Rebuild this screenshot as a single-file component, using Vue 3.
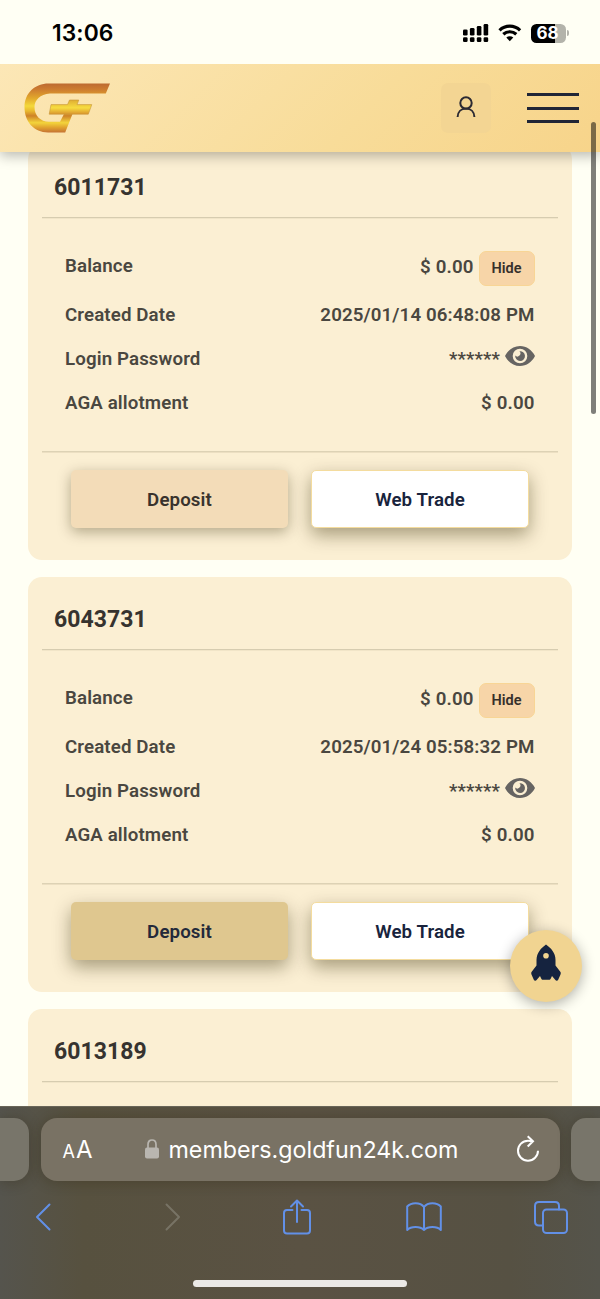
<script setup>
const accounts = [
  { id: '6011731', created: '2025/01/14 06:48:08 PM', tone: 'peach' },
  { id: '6043731', created: '2025/01/24 05:58:32 PM', tone: 'gold' },
  { id: '6013189' },
]
</script>

<template>
  <div class="phone">
    <div class="status">
      <span class="clock">13:06</span>
      <div class="indicators">
        <svg class="signal" width="26" height="18" viewBox="0 0 26 18">
          <rect x="0" y="5.5" width="4.6" height="6" rx="1.3" />
          <rect x="6.9" y="4" width="4.6" height="7.5" rx="1.3" />
          <rect x="13.8" y="2" width="4.6" height="9.5" rx="1.3" />
          <rect x="20.6" y="0" width="4.6" height="11.5" rx="1.3" />
          <rect x="0" y="13.3" width="4.6" height="4.7" rx="1.3" />
          <rect x="6.9" y="13.3" width="4.6" height="4.7" rx="1.3" />
          <rect x="13.8" y="13.3" width="4.6" height="4.7" rx="1.3" />
          <rect x="20.6" y="13.3" width="4.6" height="4.7" rx="1.3" />
        </svg>
        <svg class="wifi" width="24" height="18" viewBox="0 0 24 18">
          <path d="M1.5 6.3 A15 15 0 0 1 22.1 6.3" />
          <path d="M5.3 10.3 A9.6 9.6 0 0 1 18.3 10.3" />
          <path class="dot" d="M8.3 13.6 A5 5 0 0 1 15.3 13.6 L11.8 17.2 Z" />
        </svg>
        <div class="battery"><span>68</span></div>
        <i class="nub"></i>
      </div>
    </div>

    <header class="header">
      <svg class="logo" width="87" height="50" viewBox="0 0 87 50">
        <defs>
          <linearGradient id="gold" x1="0" y1="0" x2="0" y2="1">
            <stop offset="0" stop-color="#bd6a31" />
            <stop offset=".12" stop-color="#cd7c30" />
            <stop offset=".3" stop-color="#e2a82c" />
            <stop offset=".46" stop-color="#f4d93a" />
            <stop offset=".56" stop-color="#e9b92f" />
            <stop offset=".66" stop-color="#ce8228" />
            <stop offset=".8" stop-color="#f3d43b" />
            <stop offset=".9" stop-color="#e0a12f" />
            <stop offset="1" stop-color="#c57233" />
          </linearGradient>
          <linearGradient id="bar" x1="0" y1="0" x2="0" y2="1">
            <stop offset="0" stop-color="#dfae32" />
            <stop offset=".55" stop-color="#f7dc40" />
            <stop offset="1" stop-color="#d9942d" />
          </linearGradient>
        </defs>
        <path fill="url(#gold)" d="M24.5 .5 H86 L81.8 10.5 H26 C16 11.5 10.5 17 10.5 24 C10.5 33 16.5 38.5 25 38.8 H36 L40 31 H48.5 L41.2 49.5 H24 C10 49 .5 39 .5 24 C.5 10 11 .5 24.5 .5 Z" />
        <path fill="url(#bar)" stroke="#c8963a" stroke-width=".6" d="M27 21.6 H43.5 L45.5 17 H54.8 L53 21.6 H67.8 L64.3 31.2 H25.2 Z" />
      </svg>
      <button class="user">
        <svg width="20" height="22" viewBox="0 0 20 22">
          <circle cx="10" cy="7" r="5.7" />
          <path d="M1.6 21 C1.8 16 5 12.6 10 12.6 S18.2 16 18.4 21" />
        </svg>
      </button>
      <button class="menu"><i></i><i></i><i></i></button>
    </header>

    <main class="content">
      <section v-for="a in accounts" :key="a.id" class="card">
        <h2>{{ a.id }}</h2>
        <template v-if="a.created">
          <div class="details">
            <div class="row first">
              <span>Balance</span>
              <span class="value"><b class="amount">$ 0.00</b><button class="hide">Hide</button></span>
            </div>
            <div class="row"><span>Created Date</span><span>{{ a.created }}</span></div>
            <div class="row">
              <span>Login Password</span>
              <span class="value"><b class="stars">******</b>
                <svg class="eye" width="30" height="20" viewBox="0 0 30 20">
                  <path fill="#666462" fill-rule="evenodd" d="M0 10 C3 4 8.5 0 15 0 S27 4 30 10 C27 16 21.500 20 15 20 S3 16 0 10 Z M15 2.700 A7.300 7.300 0 1 0 15 17.300 A7.300 7.300 0 1 0 15 2.700 Z" />
                  <path fill="#666462" d="M14.400 5.200 A4.900 4.900 0 1 1 10.200 9.600 A2.900 2.900 0 0 0 14.400 5.200 Z" />
                </svg>
              </span>
            </div>
            <div class="row"><span>AGA allotment</span><span>$ 0.00</span></div>
          </div>
          <div class="actions">
            <button class="action" :class="a.tone">Deposit</button>
            <button class="action trade">Web Trade</button>
          </div>
        </template>
      </section>
    </main>

    <div class="scrollbar"></div>
    <button class="rocket">
      <svg width="30" height="38" viewBox="0 0 30 38">
        <path fill="#15233f" fill-rule="evenodd" d="M15 .5 C20 4 24.500 9 24.500 16 V21.500 L29.500 28 C30 29 29.700 30 29.300 31 L27.200 35.800 C26.500 37.200 25 37 24.200 35.800 L21 32 L19.800 34.500 C19.400 35.500 19 35.800 18 35.800 H12 C11 35.800 10.600 35.500 10.200 34.500 L9 32 L5.800 35.800 C5 37 3.500 37.200 2.800 35.800 L.7 31 C.3 30 0 29 .5 28 L5.500 21.500 V16 C5.500 9 10 4 15 .5 Z M15 9 A2.800 2.800 0 1 0 15 14.600 A2.800 2.800 0 1 0 15 9 Z" />
      </svg>
    </button>

    <footer class="browser">
      <div class="tabs">
        <div class="peek left"></div>
        <div class="address">
          <span class="aa"><small>A</small>A</span>
          <svg class="lock" width="14" height="20" viewBox="0 0 14 20">
            <path d="M3 9 V5.500 C3 -.5 11 -.5 11 5.500 V9" fill="none" stroke="#b9b6b0" stroke-width="1.700" />
            <rect y="8.500" width="14" height="11" rx="2" fill="#b9b6b0" />
          </svg>
          <span class="url">members.goldfun24k.com</span>
          <svg class="reload" width="22" height="27" viewBox="0 0 22 27">
            <path d="M21 15.700 A10 10 0 1 1 11 5.700 Q13.500 5.700 16 6.200 M10.700 1.200 L16 6.200 L10.700 11.500" />
          </svg>
        </div>
        <div class="peek right"></div>
      </div>
      <nav class="tools">
        <svg width="16" height="28" viewBox="0 0 16 28"><path d="M14.500 1.500 L2 14 L14.500 26.500" /></svg>
        <svg class="off" width="16" height="28" viewBox="0 0 16 28"><path d="M1.500 1.500 L14 14 L1.500 26.500" /></svg>
        <svg width="28" height="36" viewBox="0 0 28 36">
          <path d="M9.500 11 H4 Q1 11 1 14 V31.500 Q1 34.500 4 34.500 H24 Q27 34.500 27 31.500 V14 Q27 11 24 11 H18.500 M14 23 V2 M8 7.500 L14 1.500 L20 7.500" />
        </svg>
        <svg width="36" height="30" viewBox="0 0 36 30">
          <path d="M18 5 C14 -.3 5 .3 1.200 4.500 V28 C5 24 14 24 18 28 C22 24 31 24 34.800 28 V4.500 C31 .3 22 -.3 18 5 V28" />
        </svg>
        <svg width="34" height="33" viewBox="0 0 34 33">
          <path d="M9 24.500 H5 Q1 24.500 1 20.500 V5 Q1 1 5 1 H21 Q25 1 25 5 V8.500" />
          <rect x="9" y="8.500" width="24" height="23.500" rx="3.500" />
        </svg>
      </nav>
      <div class="home"></div>
    </footer>
  </div>
</template>

<style>
body { margin: 0; background: #fffff4; }
</style>

<style scoped>
* { box-sizing: border-box; }
button { border: 0; padding: 0; margin: 0; font: inherit; color: inherit; background: none; }
svg { display: block; flex: none; }
.phone { position: relative; width: 600px; height: 1299px; overflow: hidden; display: flex; flex-direction: column; background: #fffff4; font-family: Roboto, sans-serif; }

.status { height: 64px; flex: none; display: flex; justify-content: space-between; padding: 0 34px 0 52px; }
.clock { font: 600 22.800px/66px Inter, sans-serif; color: #000; letter-spacing: .1px; }
.indicators { display: flex; height: 66px; align-items: center; }
.signal { margin-right: 9px; }
.wifi { margin-right: 9px; }
.wifi path { fill: none; stroke: #000; stroke-width: 3.200; }
.wifi path.dot { fill: #000; stroke: none; }
.battery { width: 35px; height: 19px; padding-right: 2px; border-radius: 5.500px; background: linear-gradient(90deg, #000 68%, #b3b3aa 68%); color: #fff; font: 700 17px/19px Inter, sans-serif; text-align: center; }
.nub { width: 2px; height: 6px; margin: 0 -3px 0 1px; border-radius: 0 3px 3px 0; background: #b3b3aa; }

.header { position: relative; z-index: 2; height: 88px; flex: none; display: flex; align-items: center; padding: 0 21px 0 24px; background: linear-gradient(135deg, #fce7b6 0%, #f8dc99 60%, #f7d48a 100%); box-shadow: 0 4px 12px rgba(0, 0, 0, .27); clip-path: inset(0 0 -30px 0); }
.logo { margin: -1px 0 0 -.5px; }
.user { width: 50px; height: 50px; margin-left: auto; border-radius: 7px; background: #f3d593; display: grid; place-items: center; }
.user svg { margin-top: -2px; fill: none; stroke: #2b2a33; stroke-width: 2; }
.menu { width: 52px; height: 30px; margin-left: 36px; display: flex; flex-direction: column; justify-content: space-between; }
.menu i { height: 3px; background: #202536; }

.content { flex: 1; min-height: 0; overflow: hidden; padding: 0 28px; }
.card { height: 414.500px; margin-bottom: 17.500px; padding: 0 14px; border-radius: 14px; background: #fbefd3; overflow: hidden; }
.card:first-child { margin-top: -7px; }
.card:last-child { height: 97px; margin-bottom: 0; border-radius: 14px 14px 0 0; }
h2 { margin: 0; height: 73px; padding: 5px 12px 0; border-bottom: 1px solid #d6ccb0; box-shadow: 0 1px 0 #f1e5c8; font-size: 23px; font-weight: 700; line-height: 76px; color: #36332f; letter-spacing: .05px; }
.details { height: 234px; padding: 23.500px 23.500px 0 23px; border-bottom: 1px solid #ddd2b5; box-shadow: 0 1px 0 #ecdfc2; font-size: 18.700px; font-weight: 600; color: #4a4740; letter-spacing: .12px; }
.row { height: 44.300px; display: flex; align-items: center; justify-content: space-between; }
.row.first { height: 51px; }
.row.first > span:first-child { margin-top: -3px; }
.value { display: flex; align-items: center; }
b { font-weight: inherit; }
.hide { width: 56px; height: 35px; margin: 2px 0 0 5px; border: 1px solid #f8d595; border-radius: 7px; background: #f7d5a8; font-size: 14.500px; font-weight: 600; color: #36302b; }
.stars { margin-right: 4.500px; }
.eye { margin-top: -5px; }
.actions { display: flex; gap: 23px; padding: 18px 29px; }
.action { width: 217px; height: 58px; padding: 1px 0 0; border-radius: 5px; font-size: 18.700px; font-weight: 600; letter-spacing: .1px; color: #39332d; box-shadow: 0 4px 14px rgba(50, 40, 0, .36); }
.action.peach { background: #f3dcb8; }
.action.gold { background: #dfc78f; color: #23293a; box-shadow: 0 7px 18px rgba(50, 40, 0, .42); }
.action.trade { width: 218px; background: #fff; border: 1.500px solid #f4dc9e; color: #19243d; box-shadow: 0 7px 18px rgba(50, 40, 0, .42); }

.scrollbar { position: absolute; z-index: 3; left: 591px; top: 122px; width: 5px; height: 292px; border-radius: 3px; background: rgba(0, 0, 0, .5); }
.rocket { position: absolute; left: 510px; top: 929.500px; width: 72px; height: 72px; border-radius: 50%; background: #f1d491; box-shadow: 0 3px 14px rgba(0, 0, 0, .32); display: grid; place-items: center; padding-bottom: 5px; }

.browser { height: 193px; flex: none; border-top: 1px solid #6a6659; background: linear-gradient(90deg, #55544d 0, #57513f 14%, #5a5243 50%, #565143 85%, #55544b 100%); }
.tabs { display: flex; justify-content: space-between; padding-top: 11px; }
.peek, .address { height: 63px; background: #78756a; box-shadow: 0 1px 14px rgba(45, 35, 10, .32); }
.peek { width: 29px; }
.left { border-radius: 0 15px 15px 0; }
.right { border-radius: 15px 0 0 15px; }
.address { width: 519px; border-radius: 16px; background: #797264; display: flex; align-items: center; padding: 0 21px 0 22px; color: #fff; font-family: Inter, sans-serif; }
.aa { width: 82px; padding-top: 2px; font-size: 24px; line-height: 30px; }
.aa small { margin-right: 1px; font-size: 18px; }
.lock { margin-top: -1px; }
.url { margin-left: 10px; font-size: 23.250px; }
.reload { margin: -3px 0 0 auto; fill: none; stroke: #fff; stroke-width: 2; }
.tools { height: 36px; margin: 18px 0 0 -20.500px; display: grid; grid-template-columns: repeat(5, 127px); place-items: center; }
.tools svg { fill: none; stroke: #6290e7; stroke-width: 2; stroke-linejoin: round; stroke-linecap: round; }
.tools .off { margin-left: 6px; stroke: #777365; }
.home { width: 214px; height: 7px; margin: 44.500px auto 0; border-radius: 4px; background: #ebe9e6; }
</style>
